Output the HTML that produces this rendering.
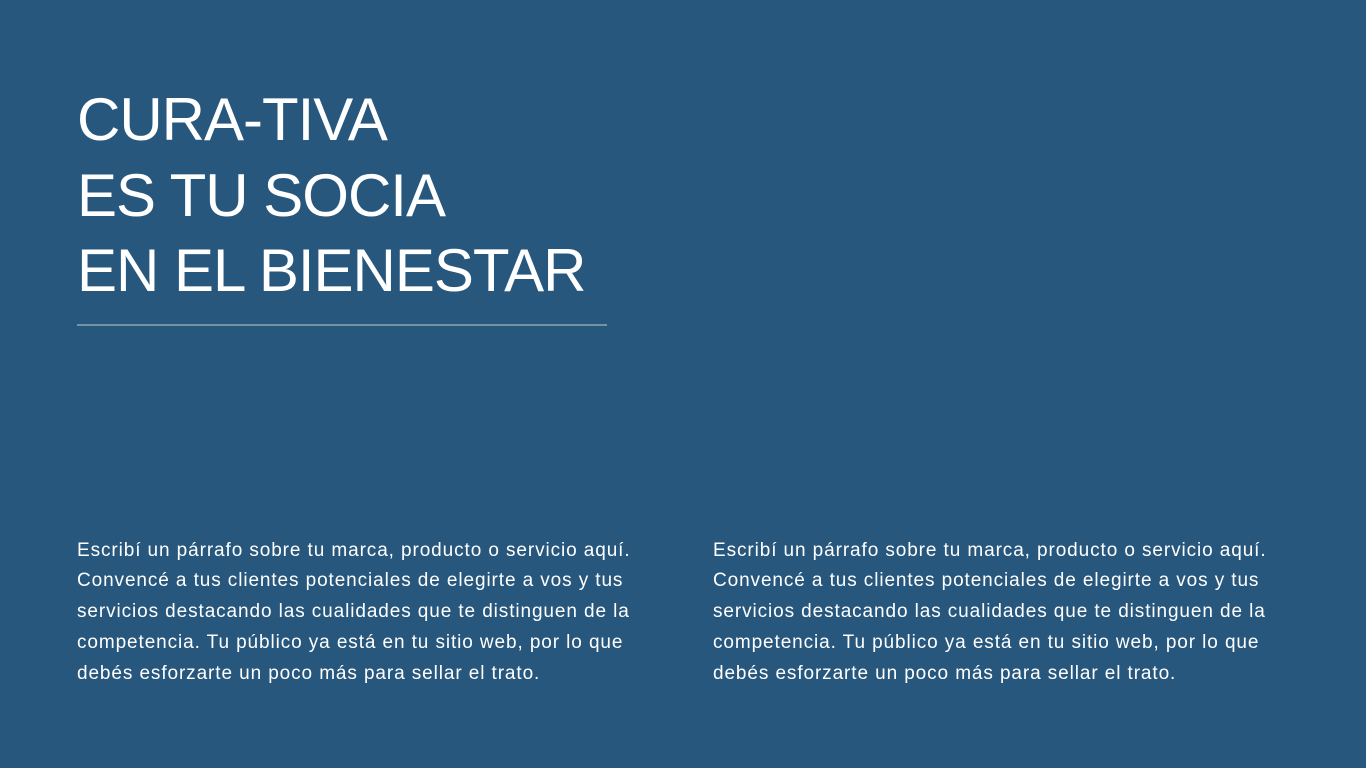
<!DOCTYPE html>
<html><head><meta charset="utf-8"><style>
html,body{margin:0;padding:0;}
body{width:1366px;height:768px;background:#27577d;position:relative;overflow:hidden;font-family:"Liberation Sans",sans-serif;color:#fff;}
h1{position:absolute;left:77px;top:82px;margin:0;font-weight:400;font-size:60px;line-height:75.5px;letter-spacing:-1px;white-space:nowrap;}
.rule{position:absolute;left:77px;top:324px;width:530px;height:2px;background:#7393a8;}
p{position:absolute;top:535.5px;margin:0;font-size:19px;line-height:30.8px;width:640px;letter-spacing:0.9px;white-space:nowrap;}
</style></head><body>
<h1>CURA-TIVA<br>ES TU SOCIA<br>EN EL BIENESTAR</h1>
<div class="rule"></div>
<p style="left:77px">Escribí un párrafo sobre tu marca, producto o servicio aquí.<br>Convencé a tus clientes potenciales de elegirte a vos y tus<br>servicios destacando las cualidades que te distinguen de la<br>competencia. Tu público ya está en tu sitio web, por lo que<br>debés esforzarte un poco más para sellar el trato.</p>
<p style="left:713px">Escribí un párrafo sobre tu marca, producto o servicio aquí.<br>Convencé a tus clientes potenciales de elegirte a vos y tus<br>servicios destacando las cualidades que te distinguen de la<br>competencia. Tu público ya está en tu sitio web, por lo que<br>debés esforzarte un poco más para sellar el trato.</p>
</body></html>
